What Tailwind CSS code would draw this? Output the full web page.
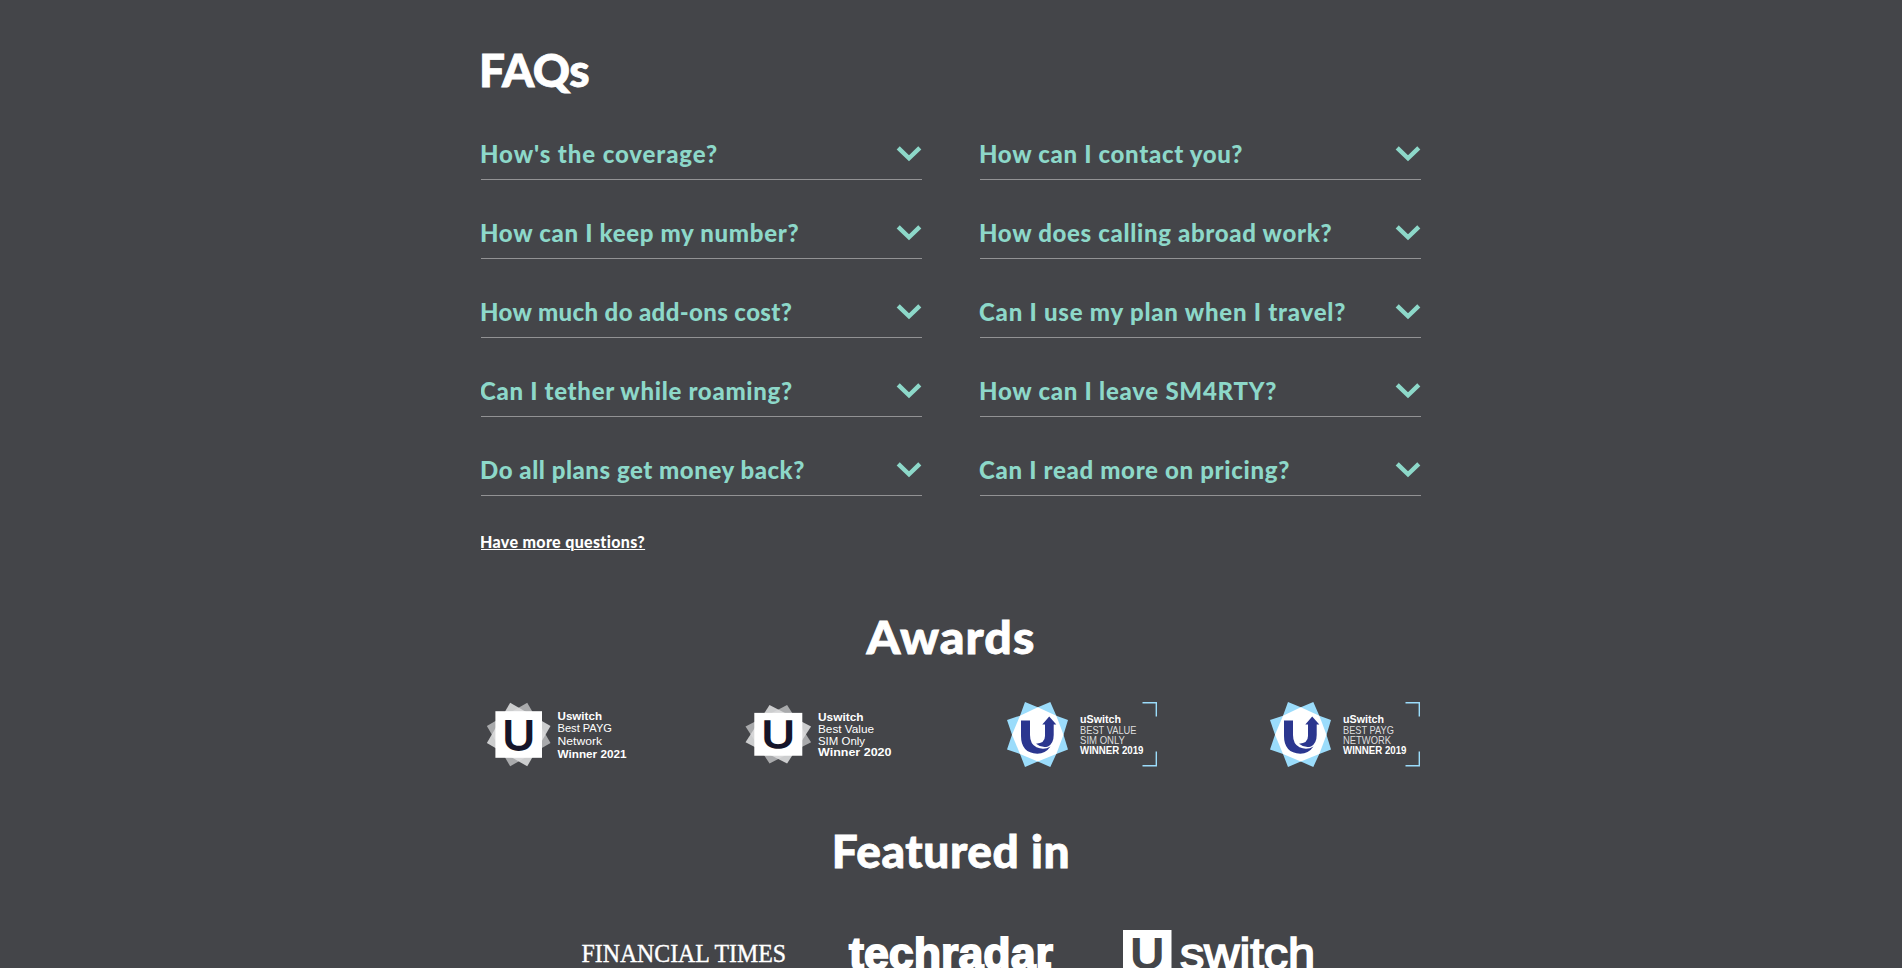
<!DOCTYPE html>
<html lang="en">
<head>
<meta charset="utf-8">
<title>FAQs</title>
<script src="https://cdn.jsdelivr.net/npm/@tailwindcss/browser@4"></script>
</head>
<body class="overflow-hidden bg-[#444549] font-['Lato',sans-serif] text-white">
<svg class="hidden">
  <symbol id="chevron" viewBox="0 0 26 18"><path d="M2.2 2.8 13 13.3 23.8 2.8" fill="none" stroke="currentColor" stroke-width="4.4"/></symbol>
  <symbol id="badge-blue" viewBox="0 0 76 90">
    <path fill="#9bdcfb" d="M30 12 42.8 17.3 55.3 12 61.3 25.7 73 30 68.5 44.7 73 59.5 61.3 64 55.3 77 42.8 71.5 30 77 25 64 12 59.5 17 44.7 12 30 25 25.7Z"/>
    <path fill="#fff" d="M42.8 17.3 61.3 25.7 68.5 44.7 61.3 64 42.8 71.5 25 64 17 44.7 25 25.7Z"/>
    <path fill="#2b368f" d="M26 30.5H35V45Q35 54 41.5 57.3 49 60.5 55.5 56.5 50.5 63.7 42.3 63.7 26 63 26 46Z"/>
    <path fill="#2b368f" d="M54.2 26.5 61.3 34.5H58.7V45Q58.7 53.3 53 56.5 47 58.5 41 53.7 50 53.3 50 46V34.5H47.3Z"/>
  </symbol>
  <symbol id="brackets" viewBox="0 0 18 66"><path d="M1 1.7H14.8V15.5M14.8 50.5V64.8H1" fill="none" stroke="#9bdcfb" stroke-width="1.4"/></symbol>
</svg>

<main class="mx-auto h-[968px] w-[940px] overflow-hidden pt-[42px]">
  <h1 class="-ml-0.5 h-14 text-[46px] leading-14 font-black tracking-[-0.4px] [-webkit-text-stroke:0.8px_currentColor]">FAQs</h1>

  <section class="mt-[3px] grid grid-cols-2 gap-x-[58px] text-2xl leading-8 font-black text-[#8dd8c9]">
    <div class="flex h-[79px] justify-between border-b border-[#929294] pt-[37px]"><span class="-ml-px whitespace-nowrap tracking-[0.9px]">How's the coverage?</span><svg class="mt-[7px] h-[18px] w-[26px] shrink-0"><use href="#chevron"/></svg></div>
    <div class="flex h-[79px] justify-between border-b border-[#929294] pt-[37px]"><span class="-ml-px whitespace-nowrap tracking-[0.68px]">How can I contact you?</span><svg class="mt-[7px] h-[18px] w-[26px] shrink-0"><use href="#chevron"/></svg></div>
    <div class="flex h-[79px] justify-between border-b border-[#929294] pt-[37px]"><span class="-ml-px whitespace-nowrap tracking-[0.68px]">How can I keep my number?</span><svg class="mt-[7px] h-[18px] w-[26px] shrink-0"><use href="#chevron"/></svg></div>
    <div class="flex h-[79px] justify-between border-b border-[#929294] pt-[37px]"><span class="-ml-px whitespace-nowrap tracking-[0.67px]">How does calling abroad work?</span><svg class="mt-[7px] h-[18px] w-[26px] shrink-0"><use href="#chevron"/></svg></div>
    <div class="flex h-[79px] justify-between border-b border-[#929294] pt-[37px]"><span class="-ml-px whitespace-nowrap tracking-[0.37px]">How much do add-ons cost?</span><svg class="mt-[7px] h-[18px] w-[26px] shrink-0"><use href="#chevron"/></svg></div>
    <div class="flex h-[79px] justify-between border-b border-[#929294] pt-[37px]"><span class="-ml-px whitespace-nowrap tracking-[0.77px]">Can I use my plan when I travel?</span><svg class="mt-[7px] h-[18px] w-[26px] shrink-0"><use href="#chevron"/></svg></div>
    <div class="flex h-[79px] justify-between border-b border-[#929294] pt-[37px]"><span class="-ml-px whitespace-nowrap tracking-[0.69px]">Can I tether while roaming?</span><svg class="mt-[7px] h-[18px] w-[26px] shrink-0"><use href="#chevron"/></svg></div>
    <div class="flex h-[79px] justify-between border-b border-[#929294] pt-[37px]"><span class="-ml-px whitespace-nowrap tracking-[0.74px]">How can I leave SM4RTY?</span><svg class="mt-[7px] h-[18px] w-[26px] shrink-0"><use href="#chevron"/></svg></div>
    <div class="flex h-[79px] justify-between border-b border-[#929294] pt-[37px]"><span class="-ml-px whitespace-nowrap tracking-[0.54px]">Do all plans get money back?</span><svg class="mt-[7px] h-[18px] w-[26px] shrink-0"><use href="#chevron"/></svg></div>
    <div class="flex h-[79px] justify-between border-b border-[#929294] pt-[37px]"><span class="-ml-px whitespace-nowrap tracking-[0.68px]">Can I read more on pricing?</span><svg class="mt-[7px] h-[18px] w-[26px] shrink-0"><use href="#chevron"/></svg></div>
  </section>

  <a class="-ml-px mt-[34px] block w-fit text-base leading-6 font-black tracking-[0.34px] underline decoration-1 underline-offset-1">Have more questions?</a>

  <h2 class="mt-[55px] h-14 scale-x-105 text-center text-[46px] leading-14 font-black tracking-[1px] [-webkit-text-stroke:0.8px_currentColor]">Awards</h2>

  <section class="mt-[25px] -ml-1.5 flex w-[960px] gap-[90px] font-['Liberation_Sans',sans-serif]">
    <svg class="h-[90px] w-[170px] shrink-0" viewBox="0 0 170 90" fill="#fff">
      <rect x="20.4" y="21.2" width="46.6" height="46.6" fill="#a9aaac" transform="rotate(-30 43.7 44.5)"/>
      <rect x="20.4" y="21.2" width="46.6" height="46.6" fill="#dcdcdd" fill-opacity=".9" transform="rotate(30 43.7 44.5)"/>
      <rect x="20.4" y="21.2" width="46.6" height="46.6"/>
      <text x="27.7" y="59.5" font-size="43" fill="#15152a" stroke="#15152a" stroke-width="1.8" textLength="32" lengthAdjust="spacingAndGlyphs">U</text>
      <text x="82.500" y="29.5" font-size="11.5" font-weight="700" textLength="44.5" lengthAdjust="spacingAndGlyphs">Uswitch</text>
      <text x="82.500" y="42.3" font-size="11.5" textLength="54.5" lengthAdjust="spacingAndGlyphs">Best PAYG</text>
      <text x="82.500" y="55" font-size="11.5" textLength="44.5" lengthAdjust="spacingAndGlyphs">Network</text>
      <text x="82.500" y="68" font-size="11.5" font-weight="700" textLength="69" lengthAdjust="spacingAndGlyphs">Winner 2021</text>
    </svg>
    <svg class="h-[90px] w-[170px] shrink-0" viewBox="0 0 170 90" fill="#fff">
      <g transform="translate(43.3 44.3) scale(1.03 .92) translate(-43.7 -44.5)">
        <rect x="20.4" y="21.2" width="46.6" height="46.6" fill="#a9aaac" transform="rotate(-30 43.7 44.5)"/>
        <rect x="20.4" y="21.2" width="46.6" height="46.6" fill="#dcdcdd" fill-opacity=".9" transform="rotate(30 43.7 44.5)"/>
        <rect x="20.4" y="21.2" width="46.6" height="46.6"/>
        <text x="27.7" y="59.5" font-size="43" fill="#15152a" stroke="#15152a" stroke-width="1.8" textLength="32" lengthAdjust="spacingAndGlyphs">U</text>
      </g>
      <text x="83" y="30.5" font-size="11" font-weight="700" textLength="45.5" lengthAdjust="spacingAndGlyphs">Uswitch</text>
      <text x="83" y="42.5" font-size="11" textLength="56" lengthAdjust="spacingAndGlyphs">Best Value</text>
      <text x="83" y="54.5" font-size="11" textLength="47" lengthAdjust="spacingAndGlyphs">SIM Only</text>
      <text x="83" y="66" font-size="11" font-weight="700" textLength="73.5" lengthAdjust="spacingAndGlyphs">Winner 2020</text>
    </svg>
    <svg class="h-[90px] w-[170px] shrink-0" viewBox="0 0 170 90" fill="#fff">
      <use href="#badge-blue" width="76" height="90"/>
      <use href="#brackets" x="146.5" y="11" width="18" height="66"/>
      <text x="85" y="32.5" font-size="11" font-weight="700" textLength="41" lengthAdjust="spacingAndGlyphs">uSwitch</text>
      <text x="85" y="43.6" font-size="11" fill="#dededf" textLength="56.5" lengthAdjust="spacingAndGlyphs">BEST VALUE</text>
      <text x="85" y="53.8" font-size="11" fill="#dededf" textLength="45" lengthAdjust="spacingAndGlyphs">SIM ONLY</text>
      <text x="85" y="63.8" font-size="11" font-weight="700" textLength="63.5" lengthAdjust="spacingAndGlyphs">WINNER 2019</text>
    </svg>
    <svg class="ml-[3px] h-[90px] w-[170px] shrink-0" viewBox="0 0 170 90" fill="#fff">
      <use href="#badge-blue" width="76" height="90"/>
      <use href="#brackets" x="146.5" y="11" width="18" height="66"/>
      <text x="85" y="32.5" font-size="11" font-weight="700" textLength="41" lengthAdjust="spacingAndGlyphs">uSwitch</text>
      <text x="85" y="43.6" font-size="11" fill="#dededf" textLength="51" lengthAdjust="spacingAndGlyphs">BEST PAYG</text>
      <text x="85" y="53.8" font-size="11" fill="#dededf" textLength="48" lengthAdjust="spacingAndGlyphs">NETWORK</text>
      <text x="85" y="63.8" font-size="11" font-weight="700" textLength="63.5" lengthAdjust="spacingAndGlyphs">WINNER 2019</text>
    </svg>
  </section>

  <h2 class="mt-[43px] h-14 text-center text-[46px] leading-14 font-black tracking-[0.6px] [-webkit-text-stroke:0.8px_currentColor]">Featured in</h2>

  <section class="mt-[41px] ml-[99px] flex font-['Liberation_Sans',sans-serif]">
    <svg class="h-12 w-[267px] shrink-0 font-['Liberation_Serif',serif]" viewBox="0 0 267 48" fill="#fff">
      <text x="1.5" y="41.7" font-size="25.5" textLength="204.5" lengthAdjust="spacingAndGlyphs" stroke="#fff" stroke-width=".4">FINANCIAL TIMES</text>
    </svg>
    <svg class="h-12 w-[270px] shrink-0" viewBox="0 0 270 48" fill="#fff" font-weight="700">
      <text x="2" y="48.5" font-size="44" textLength="204" lengthAdjust="spacingAndGlyphs" stroke="#fff" stroke-width="1.8">techradar</text>
      <text x="194.5" y="48.5" font-size="46">.</text>
    </svg>
    <svg class="h-12 w-[200px] shrink-0" viewBox="0 0 200 48" fill="#fff">
      <rect x="6" y="10" width="48.5" height="40"/>
      <text x="13" y="49" font-size="44" font-weight="700" fill="#444549" textLength="34.500" lengthAdjust="spacingAndGlyphs">U</text>
      <text x="63" y="49" font-size="43.5" textLength="135" lengthAdjust="spacingAndGlyphs" stroke="#fff" stroke-width="1.7">switch</text>
    </svg>
  </section>
</main>
</body>
</html>
